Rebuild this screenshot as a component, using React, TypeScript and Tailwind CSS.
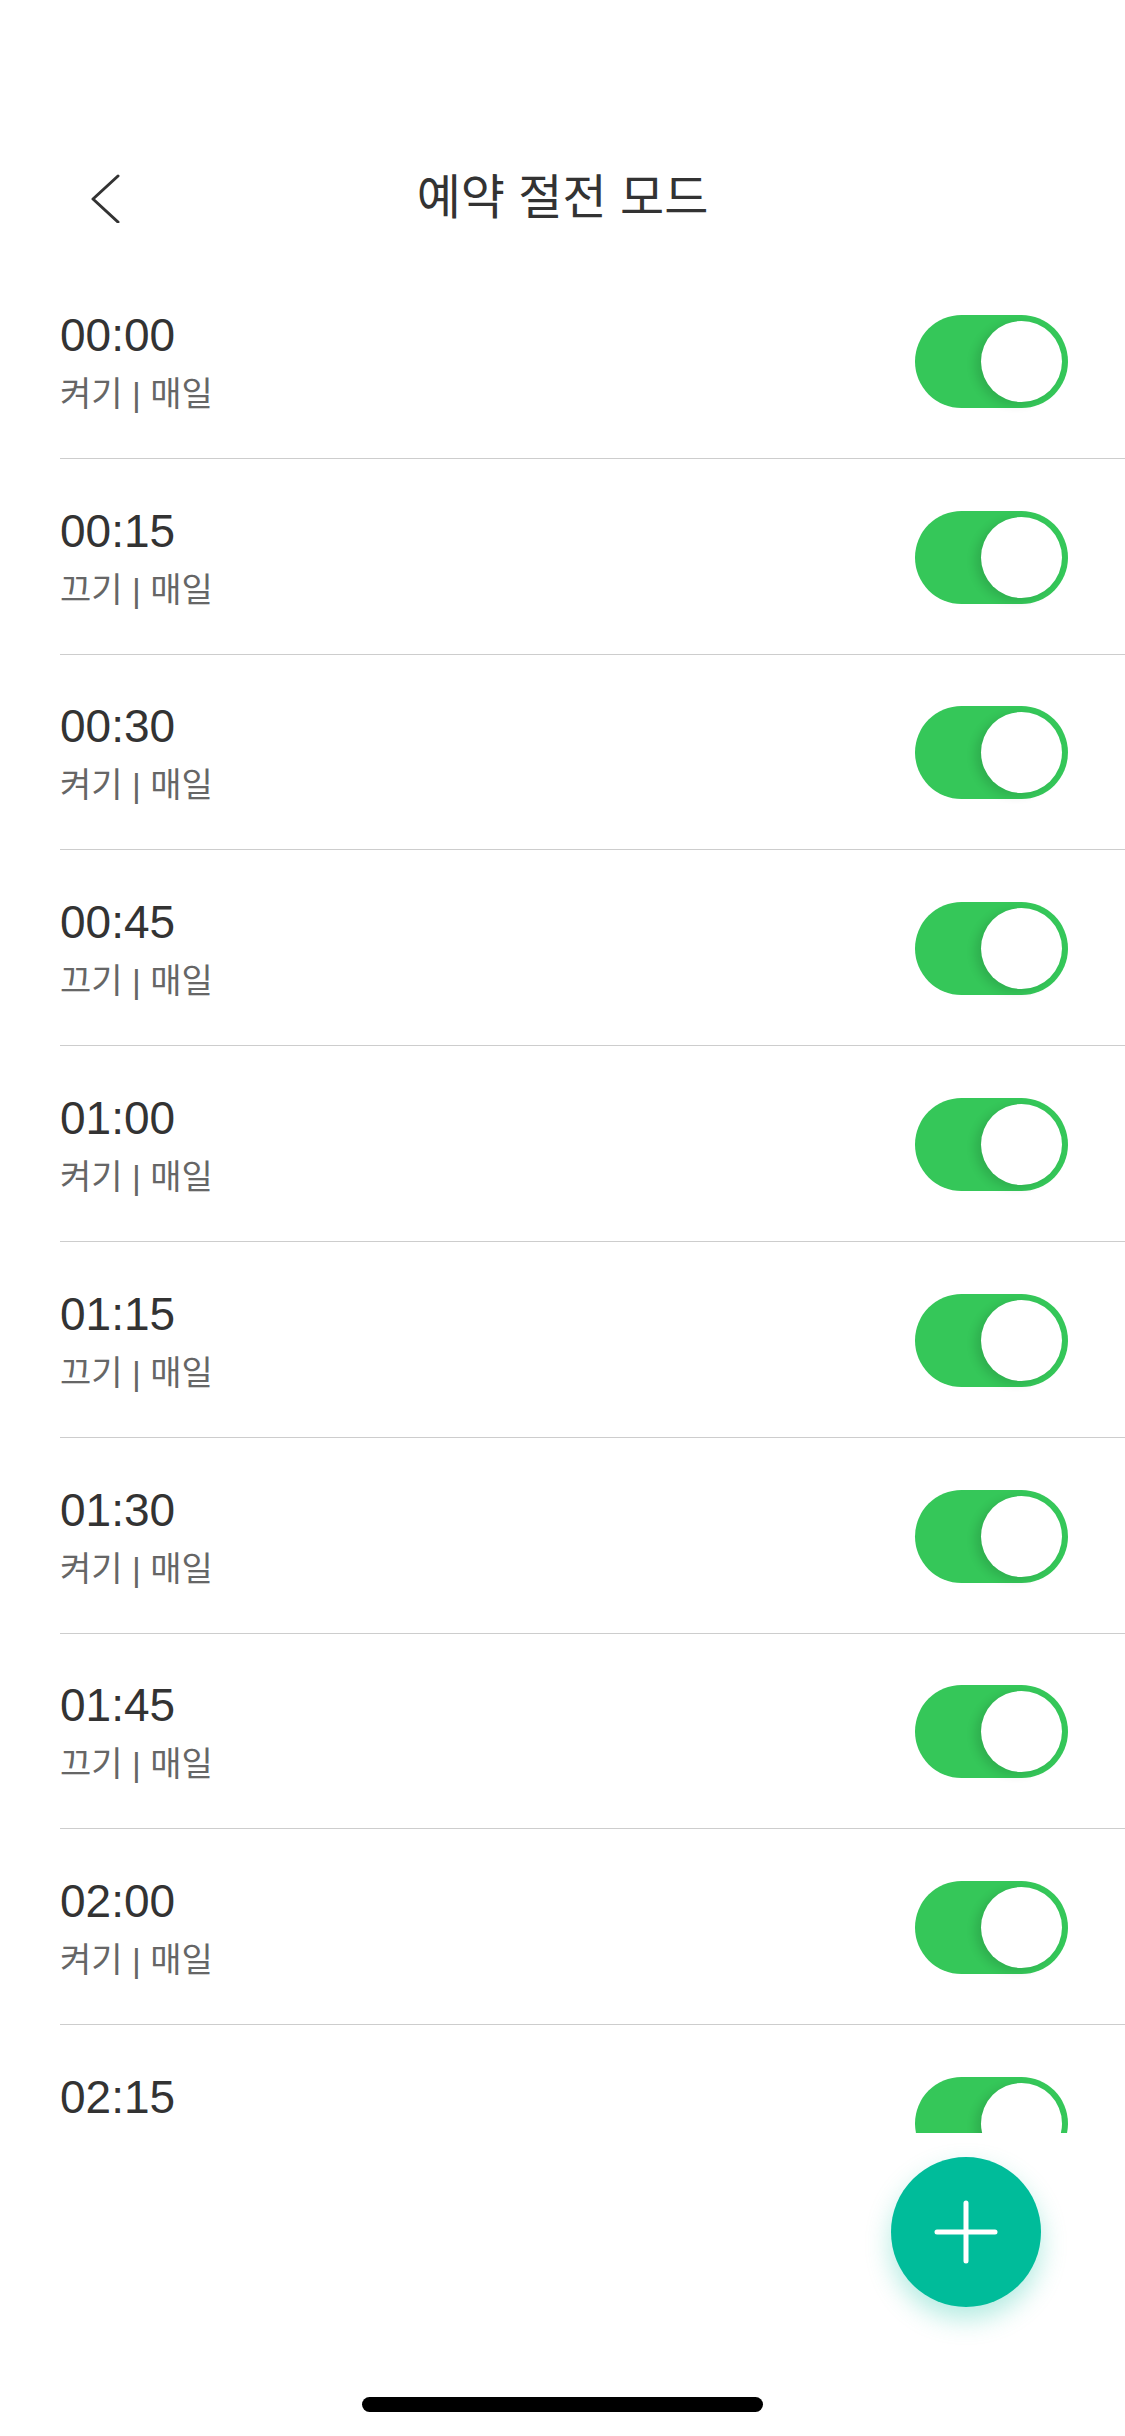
import React from 'react';

interface Schedule {
  time: string;
  action: string;
  repeat: string;
  on: boolean;
}

const schedules: Schedule[] = [
  { time: '00:00', action: '켜기', repeat: '매일', on: true },
  { time: '00:15', action: '끄기', repeat: '매일', on: true },
  { time: '00:30', action: '켜기', repeat: '매일', on: true },
  { time: '00:45', action: '끄기', repeat: '매일', on: true },
  { time: '01:00', action: '켜기', repeat: '매일', on: true },
  { time: '01:15', action: '끄기', repeat: '매일', on: true },
  { time: '01:30', action: '켜기', repeat: '매일', on: true },
  { time: '01:45', action: '끄기', repeat: '매일', on: true },
  { time: '02:00', action: '켜기', repeat: '매일', on: true },
  { time: '02:15', action: '끄기', repeat: '매일', on: true },
];

const font = { fontFamily: '"Liberation Sans", "Noto Sans CJK KR", sans-serif' };

function Toggle({ on }: { on: boolean }) {
  return (
    <div
      className={`w-[153px] h-[93px] rounded-full p-[6px] flex shrink-0 ${on ? 'bg-[#35c759] justify-end' : 'bg-[#e5e5ea] justify-start'}`}
    >
      <div className="w-[81px] h-[81px] rounded-full bg-white shadow-[-6px_3px_10px_rgba(0,0,0,0.12)]" />
    </div>
  );
}

function Row({ item }: { item: Schedule }) {
  return (
    <div className="ml-[60px] pr-[57px] h-[195.8px] shrink-0 border-b border-[#cdcdcd] flex items-center justify-between">
      <div className="flex flex-col pt-[3px]">
        <span className="text-[46px] leading-[54px] text-[#333333]">{item.time}</span>
        <span className="text-[34px] leading-[44px] text-[#666666] mt-[10px]">
          {item.action} | {item.repeat}
        </span>
      </div>
      <div className="pt-[2px]">
        <Toggle on={item.on} />
      </div>
    </div>
  );
}

export default function App() {
  return (
    <div className="relative w-[1125px] h-[2436px] bg-white overflow-hidden flex flex-col" style={font}>
      {/* status bar space */}
      <div className="h-[132px] shrink-0" />

      {/* Nav */}
      <div className="h-[131px] shrink-0 grid grid-cols-[1fr_auto_1fr] items-center">
        <button className="justify-self-start ml-[90px] w-[32px] h-[50px] flex items-center">
          <svg width="32" height="50" viewBox="0 0 32 50" fill="none">
            <polyline points="28,3 3,26 28,49" stroke="#333333" strokeWidth="3" strokeLinecap="round" strokeLinejoin="round" />
          </svg>
        </button>
        <h1 className="text-[48px] leading-none text-[#333333] font-normal">예약 절전 모드</h1>
        <div />
      </div>

      {/* List */}
      <div className="h-[1870px] shrink-0 overflow-hidden flex flex-col">
        {schedules.map((s) => (
          <Row key={s.time} item={s} />
        ))}
      </div>

      {/* Bottom */}
      <div className="flex-1 flex items-end justify-center pb-[24px]">
        <div className="w-[401px] h-[15px] rounded-full bg-black" />
      </div>

      {/* FAB */}
      <button className="absolute left-[891px] top-[2157px] w-[150px] h-[150px] rounded-full bg-[#00bc9a] shadow-[0_12px_26px_rgba(0,188,154,0.3)] flex items-center justify-center">
        <svg width="64" height="64" viewBox="0 0 64 64" fill="none">
          <path d="M32 3 V61 M3 32 H61" stroke="#ffffff" strokeWidth="5" strokeLinecap="round" />
        </svg>
      </button>
    </div>
  );
}
